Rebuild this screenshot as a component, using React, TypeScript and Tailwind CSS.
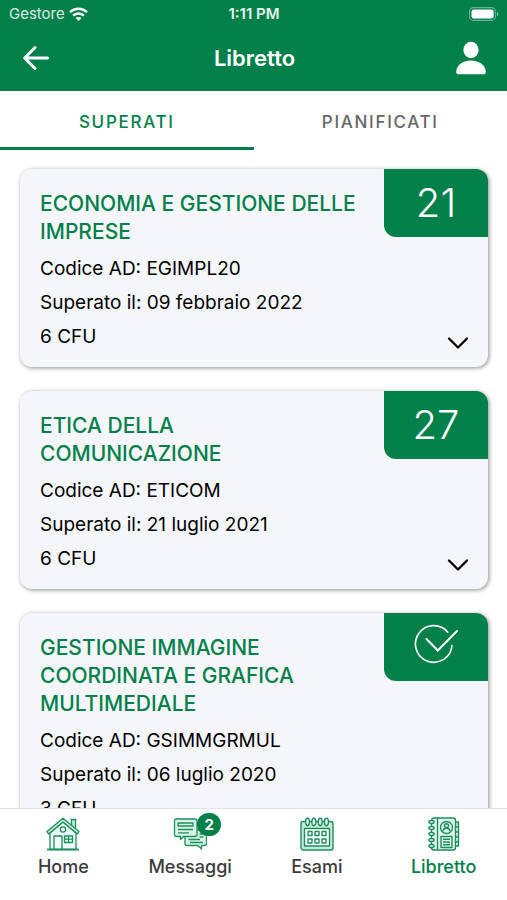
import { useState, type ReactNode } from 'react'
import { clsx } from 'clsx'

interface Exam {
  title: string
  code: string
  passedOn: string
  credits: number
  grade?: number
}

const exams: Exam[] = [
  { title: 'ECONOMIA E GESTIONE DELLE IMPRESE', code: 'EGIMPL20', passedOn: '09 febbraio 2022', credits: 6, grade: 21 },
  { title: 'ETICA DELLA COMUNICAZIONE', code: 'ETICOM', passedOn: '21 luglio 2021', credits: 6, grade: 27 },
  {
    title: 'GESTIONE IMMAGINE COORDINATA E GRAFICA MULTIMEDIALE',
    code: 'GSIMMGRMUL',
    passedOn: '06 luglio 2020',
    credits: 3,
  },
]

export default function App() {
  return (
    <div className="flex h-dvh flex-col overflow-hidden bg-white font-['Inter',sans-serif] text-black">
      <header className="shrink-0 bg-[#02804a] text-white">
        <StatusBar />
        <TopBar />
      </header>
      <Tabs />
      <main className="min-h-0 flex-1 overflow-hidden pt-[19px] pr-[19px] pl-5">
        <div className="flex flex-col gap-6">
          {exams.map((exam) => (
            <ExamCard key={exam.code} exam={exam} />
          ))}
        </div>
      </main>
      <BottomNav />
    </div>
  )
}

function StatusBar() {
  return (
    <div className="grid h-7 grid-cols-3 items-center pr-2 pl-[9px] text-[15px]">
      <div className="flex items-center gap-1 text-white/85">
        <span>Gestore</span>
        <WifiIcon />
      </div>
      <span className="text-center font-semibold text-white/90">1:11 PM</span>
      <BatteryIcon />
    </div>
  )
}

function TopBar() {
  return (
    <div className="grid h-[63px] grid-cols-3 items-center pr-5 pb-[3px] pl-[22px]">
      <button type="button" aria-label="Indietro" className="justify-self-start">
        <svg width="28" height="28" viewBox="0 0 28 28" fill="none" stroke="currentColor" strokeWidth="3" strokeLinecap="round" strokeLinejoin="round">
          <path d="M13 3.500 2.700 14 13 24.500M3 14h22.500" />
        </svg>
      </button>
      <h1 className="text-center text-[22px] font-semibold">Libretto</h1>
      <button type="button" aria-label="Profilo" className="justify-self-end">
        <svg width="32" height="34" viewBox="0 0 32 34" fill="currentColor">
          <ellipse cx="16" cy="9" rx="7.600" ry="8.200" />
          <path d="M1.200 31C1.200 24.500 7.500 19.400 16 19.400S30.800 24.500 30.800 31c0 1.500-.8 2.300-2.300 2.300h-25c-1.500 0-2.300-.8-2.300-2.300Z" />
        </svg>
      </button>
    </div>
  )
}

function Tabs() {
  const [active, setActive] = useState('SUPERATI')

  return (
    <div role="tablist" className="grid h-[59px] shrink-0 grid-cols-2">
      {['SUPERATI', 'PIANIFICATI'].map((tab) => (
        <button
          key={tab}
          type="button"
          role="tab"
          aria-selected={tab === active}
          onClick={() => setActive(tab)}
          className={clsx(
            'border-b-[3px] pt-2 text-[17px] font-medium tracking-widest',
            tab === active ? 'border-[#02804a] text-[#02804a]' : 'border-transparent text-[#666666]',
          )}
        >
          {tab}
        </button>
      ))}
    </div>
  )
}

function ExamCard({ exam }: { exam: Exam }) {
  return (
    <article className="flex overflow-hidden rounded-xl bg-[#f4f6fa] shadow-[1px_1px_4px_rgba(0,0,0,0.45)]">
      <div className="min-w-0 flex-1 pt-[21px] pr-6 pb-[13px] pl-5">
        <h2 className="mb-1.5 text-[21px] leading-7 font-medium text-[#02804a]">{exam.title}</h2>
        <div className="text-[19px] leading-[34px]">
          <p>Codice AD: {exam.code}</p>
          <p>Superato il: {exam.passedOn}</p>
          <p>{exam.credits} CFU</p>
        </div>
      </div>
      <div className="flex w-26 shrink-0 flex-col items-end justify-between">
        <div className="flex h-[68px] w-full items-center justify-center rounded-bl-xl bg-[#02804a] text-[40px] font-light text-white">
          {exam.grade ?? <PassedIcon />}
        </div>
        <button type="button" aria-label="Mostra dettagli" className="mr-[19px] mb-4">
          <svg width="22" height="16" viewBox="0 0 22 16" fill="none" stroke="currentColor" strokeWidth="2.300" strokeLinecap="round" strokeLinejoin="round">
            <path d="M2 3.500 11 12.500 20 3.500" />
          </svg>
        </button>
      </div>
    </article>
  )
}

function BottomNav() {
  return (
    <nav className="grid h-[92px] shrink-0 grid-cols-4 border-t border-[#e2e2e4] bg-white pt-2">
      <NavItem label="Home" icon={<HomeIcon />} />
      <NavItem label="Messaggi" icon={<MessagesIcon />} badge={2} />
      <NavItem label="Esami" icon={<CalendarIcon />} />
      <NavItem label="Libretto" icon={<BookletIcon />} active />
    </nav>
  )
}

interface NavItemProps {
  label: string
  icon: ReactNode
  badge?: number
  active?: boolean
}

function NavItem({ label, icon, badge, active }: NavItemProps) {
  return (
    <a
      href="#"
      aria-current={active ? 'page' : undefined}
      className={clsx('flex flex-col items-center gap-0.5 text-lg font-medium', active ? 'text-[#02804a]' : 'text-[#3c3c3c]')}
    >
      <span className="relative text-[#1c8f5d]">
        {icon}
        {badge && (
          <span className="absolute -top-1 -right-3.5 flex h-[23px] w-6 items-center justify-center rounded-full bg-[#02804a] text-[15px] font-bold text-white">
            {badge}
          </span>
        )}
      </span>
      {label}
    </a>
  )
}

function WifiIcon() {
  return (
    <svg width="19" height="15" viewBox="0 0 19 15" fill="none" stroke="#fff" strokeWidth="2.400">
      <path d="M1 5.200c4.800-4.600 12.200-4.600 17 0M4.100 8.600c3.100-2.900 7.700-2.900 10.800 0" />
      <path d="M9.500 14 6.500 11c1.700-1.500 4.300-1.500 6 0Z" fill="#fff" stroke="none" />
    </svg>
  )
}

function BatteryIcon() {
  return (
    <svg width="30" height="14" viewBox="0 0 30 14" className="justify-self-end">
      <rect x=".6" y=".6" width="26" height="12.800" rx="4" fill="none" stroke="#fff" strokeOpacity=".4" strokeWidth="1.100" />
      <rect x="2.500" y="2.500" width="22.200" height="9" rx="2.300" fill="#fff" />
      <path d="M28 4.800c1.800.8 1.800 3.600 0 4.400Z" fill="#fff" fillOpacity=".5" />
    </svg>
  )
}

function PassedIcon() {
  return (
    <svg width="44" height="40" viewBox="0 0 44 40" fill="none" stroke="currentColor" strokeWidth="1.600" strokeLinecap="round" className="-mt-1.5">
      <path d="M33.800 8.200A18.300 18.300 0 1 0 38 21.500" />
      <path d="M12.500 15 23.800 26.500 43 7" strokeWidth="2" />
    </svg>
  )
}

function HomeIcon() {
  return (
    <svg width="34" height="34" viewBox="0 0 34 34" fill="none" stroke="currentColor" strokeWidth="1.300" strokeLinejoin="round">
      <path d="M4 16 17 5l13 11v16.500H4Z" fill="#eefaf4" />
      <path d="M25.500 9V2.500h4v9M24.500 2.500h6" fill="#c5ecd9" />
      <path d="M1 14.500 17 1.200 33 14.500 31.500 17 17 5 2.500 17Z" fill="#c5ecd9" />
      <path d="M1 32.500h32" strokeWidth="1.800" />
      <circle cx="17" cy="12.500" r="2.600" />
      <path d="M8 32V19h8v13M18.500 19h8v6.500h-8ZM22.500 19v6.500M18.500 22.200h8" />
    </svg>
  )
}

function MessagesIcon() {
  return (
    <svg width="34" height="34" viewBox="0 0 34 34" fill="none" stroke="currentColor" strokeWidth="1.300" strokeLinejoin="round">
      <path d="M13.500 13H31.500q2 0 2 2v11.500q0 2-2 2h-3V32L25 28.500H14q-2 0-2-2V20Z" fill="#d9f3e6" />
      <path d="M15.500 22.500H27M17 25.500h13M26.500 17h4M26.500 20h4" />
      <path d="M3.500 2H22q2 0 2 2v13.500q0 2-2 2H10.500L7.500 22.500v-3h-4q-2 0-2-2V4q0-2 2-2Z" fill="#d9f3e6" />
      <path d="M5 6h15v3H5ZM5 12.500h15M5 15.800h11" />
    </svg>
  )
}

function CalendarIcon() {
  return (
    <svg width="34" height="34" viewBox="0 0 34 34" fill="none" stroke="currentColor" strokeWidth="1.400" strokeLinejoin="round">
      <rect x="1" y="4.500" width="32" height="28.500" rx="2.500" fill="#c5ecd9" />
      <path d="M4.500 11.500h25V29h-25Z" fill="#fff" />
      {[7.5, 13.8, 20.2, 26.5].map((x) => (
        <ellipse key={x} cx={x} cy="5" rx="1.900" ry="3.700" fill="#fff" />
      ))}
      {[14.5, 22].map((y) => [8, 15, 22].map((x) => <rect key={`${x}-${y}`} x={x} y={y} width="4" height="4" />))}
    </svg>
  )
}

function BookletIcon() {
  return (
    <svg width="32" height="34" viewBox="0 0 32 34" fill="none" stroke="currentColor" strokeWidth="1.400" strokeLinejoin="round">
      <path d="M27.500 5h3v5h-3M30.500 10v5h-3M30.500 15v5h-3M30.500 20v5h-3M30.500 25v4h-3" fill="#c5ecd9" />
      <rect x="3.500" y="1" width="24" height="32" rx="2.500" fill="#e3f6ed" />
      <path d="M9.500 1v32" />
      {[5, 11, 17, 23, 29].map((y) => (
        <ellipse key={y} cx="3.500" cy={y} rx="2.600" ry="1.500" fill="#fff" />
      ))}
      <circle cx="18.500" cy="10.500" r="6" />
      <circle cx="18.500" cy="8.800" r="2" />
      <path d="M14.800 14.500c.5-4.400 6.900-4.400 7.400 0M13 19.500h11v11H13ZM15 22.200h7M15 25h7M15 27.800h7" />
    </svg>
  )
}
